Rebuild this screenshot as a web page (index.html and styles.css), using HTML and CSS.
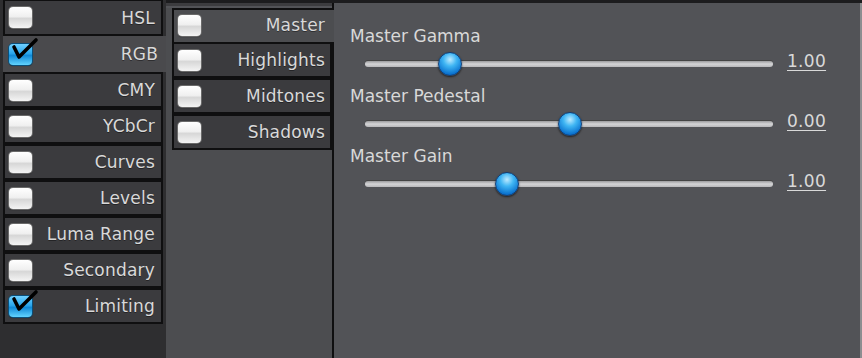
FILE: index.html
```html
<!DOCTYPE html>
<html>
<head>
<meta charset="utf-8">
<link rel="stylesheet" href="styles.css">
</head>
<body>
<div class="left">
  <div class="row"><span class="cb"></span><span class="lbl">HSL</span></div>
  <div class="row sel"><span class="cb on"><svg class="tick" viewBox="0 0 30 26"><path d="M5 10 L10 20 L27 3" fill="none" stroke="#000" stroke-width="3.6" stroke-linecap="round" stroke-linejoin="round"/></svg></span><span class="lbl">RGB</span></div>
  <div class="row"><span class="cb"></span><span class="lbl">CMY</span></div>
  <div class="row"><span class="cb"></span><span class="lbl">YCbCr</span></div>
  <div class="row"><span class="cb"></span><span class="lbl">Curves</span></div>
  <div class="row"><span class="cb"></span><span class="lbl">Levels</span></div>
  <div class="row"><span class="cb"></span><span class="lbl">Luma Range</span></div>
  <div class="row"><span class="cb"></span><span class="lbl">Secondary</span></div>
  <div class="row"><span class="cb on"><svg class="tick" viewBox="0 0 30 26"><path d="M5 10 L10 20 L27 3" fill="none" stroke="#000" stroke-width="3.6" stroke-linecap="round" stroke-linejoin="round"/></svg></span><span class="lbl">Limiting</span></div>
</div>
<div class="main">
  <div class="tabs">
    <div class="tab active"><span class="cb"></span><span class="lbl">Master</span></div>
    <div class="tab"><span class="cb"></span><span class="lbl">Highlights</span></div>
    <div class="tab"><span class="cb"></span><span class="lbl">Midtones</span></div>
    <div class="tab"><span class="cb"></span><span class="lbl">Shadows</span></div>
  </div>
  <div class="panel">
    <div class="group">
      <div class="plabel">Master Gamma</div>
      <div class="srow"><div class="track"><span class="thumb" style="left:85px"></span></div><span class="val">1.00</span></div>
    </div>
    <div class="group">
      <div class="plabel">Master Pedestal</div>
      <div class="srow"><div class="track"><span class="thumb" style="left:205px"></span></div><span class="val">0.00</span></div>
    </div>
    <div class="group">
      <div class="plabel">Master Gain</div>
      <div class="srow"><div class="track"><span class="thumb" style="left:142px"></span></div><span class="val">1.00</span></div>
    </div>
  </div>
</div>
</body>
</html>
```
FILE: styles.css
```css
html, body {
  margin: 0;
  padding: 0;
}
body {
  width: 862px;
  height: 358px;
  overflow: hidden;
  display: flex;
  background: #2c2c2e;
  font-family: "DejaVu Sans", "Liberation Sans", sans-serif;
  font-size: 17px;
  color: #d9d9d9;
}
.left {
  width: 166px;
  flex: none;
  padding: 0 3px 0 3px;
  box-sizing: border-box;
  display: flex;
  flex-direction: column;
  background: #2e2e30;
}
.row, .tab {
  height: 36px;
  box-sizing: border-box;
  border: 2px solid #0f0f10;
  background: #3b3b3e;
  display: flex;
  align-items: center;
  padding: 0 6px 0 4px;
  position: relative;
}
.row:first-child {
  border-top-width: 1px;
}
.row.sel {
  background: #4a4a4d;
  border-color: #4a4a4d;
  margin-right: -3px;
}
.lbl {
  margin-left: auto;
  letter-spacing: 0.2px;
  text-shadow: 0 1px 0 rgba(0,0,0,0.4);
}
.cb {
  width: 23px;
  height: 21px;
  box-sizing: border-box;
  border-radius: 4px;
  background: linear-gradient(#ffffff 0%, #f0f0f0 45%, #d7d7d7 55%, #f4f4f4 100%);
  box-shadow: 0 0 0 1px #6a6a6a, 0 1px 1px rgba(0,0,0,0.6);
  position: relative;
  flex: none;
}
.cb.on {
  background: linear-gradient(#6fd0ff 0%, #2aa6ec 45%, #1189d6 55%, #62d4ff 100%);
  box-shadow: 0 0 0 1px #0a4f7a, 0 1px 1px rgba(0,0,0,0.6);
}
.tick {
  position: absolute;
  left: 0;
  top: -7px;
  width: 30px;
  height: 26px;
  overflow: visible;
}
.main {
  flex: 1;
  display: flex;
  background: #525357;
  border-top: 3px solid #1c1c1e;
  padding-top: 5px;
  box-shadow: inset 0 3px 0 #3c3c3f;
}
.tabs {
  width: 166px;
  flex: none;
  padding-left: 6px;
  box-sizing: border-box;
  display: flex;
  flex-direction: column;
  background: #4c4d50;
}
.tabs .tab {
  padding-left: 4px;
  padding-right: 5px;
}
.tabs .tab.active {
  background: #4c4d50;
  border-bottom: none;
  border-right: none;
  margin-right: -2px;
  z-index: 1;
  height: 34px;
  padding-top: 0;
  padding-bottom: 2px;
  padding-right: 9px;
}
.panel {
  flex: 1;
  border-left: 2px solid #0f0f10;
  border-right: 2px solid #8c8d90;
  margin-top: -5px;
  padding: 23px 0 0 16px;
  background: #525357;
}
.group {
  height: 60px;
}
.plabel {
  height: 20px;
  line-height: 20px;
}
.srow {
  height: 28px;
  margin-top: 4px;
  display: flex;
  align-items: center;
}
.track {
  margin-left: 15px;
  width: 408px;
  height: 6px;
  border-radius: 3px;
  background: linear-gradient(#9b9b9d, #d4d4d6 50%, #b8b8ba);
  box-shadow: 0 -1px 0 #444;
  position: relative;
}
.thumb {
  position: absolute;
  top: -9px;
  width: 24px;
  height: 24px;
  margin-left: -12px;
  border-radius: 50%;
  box-sizing: border-box;
  border: 1px solid #10407a;
  background: radial-gradient(circle at 50% 30%, #bdeaff 0%, #3fb5f3 35%, #0c74d0 75%, #0b4fa0 100%);
  box-shadow: 0 1px 2px rgba(0,0,0,0.6);
}
.val {
  margin-left: 14px;
  margin-bottom: 6px;
  text-decoration: underline;
  text-underline-offset: 3px;
  font-size: 17px;
  letter-spacing: 0.3px;
}
```
